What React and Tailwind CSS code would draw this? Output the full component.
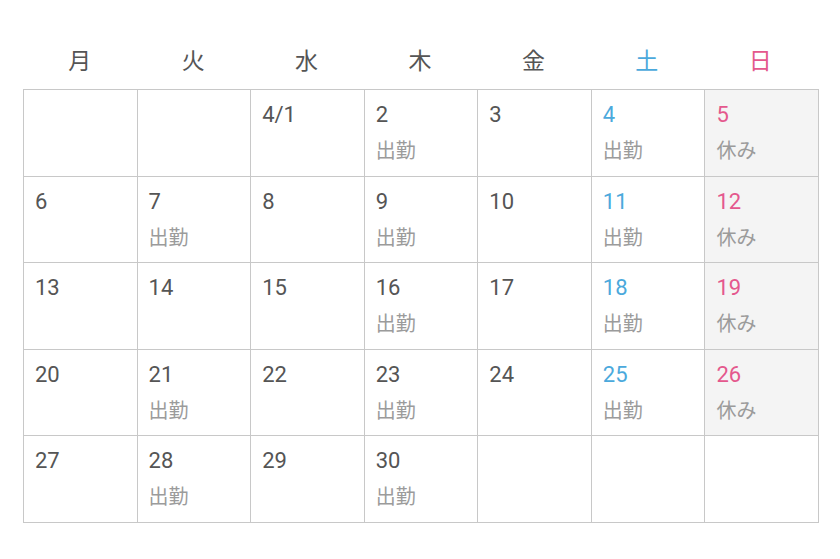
import React from "react";

const days = ["月", "火", "水", "木", "金", "土", "日"];

// null = empty cell
const weeks = [
  [null, null, { d: "4/1" }, { d: "2", s: "出勤" }, { d: "3" }, { d: "4", s: "出勤" }, { d: "5", s: "休み" }],
  [{ d: "6" }, { d: "7", s: "出勤" }, { d: "8" }, { d: "9", s: "出勤" }, { d: "10" }, { d: "11", s: "出勤" }, { d: "12", s: "休み" }],
  [{ d: "13" }, { d: "14" }, { d: "15" }, { d: "16", s: "出勤" }, { d: "17" }, { d: "18", s: "出勤" }, { d: "19", s: "休み" }],
  [{ d: "20" }, { d: "21", s: "出勤" }, { d: "22" }, { d: "23", s: "出勤" }, { d: "24" }, { d: "25", s: "出勤" }, { d: "26", s: "休み" }],
  [{ d: "27" }, { d: "28", s: "出勤" }, { d: "29" }, { d: "30", s: "出勤" }, null, null, null],
];

const headColor = (i) =>
  i === 5 ? "text-[#4ba9dc]" : i === 6 ? "text-[#e4588d]" : "text-[#555555]";

const Cell = ({ cell, col }) => {
  const bg = cell && col === 6 ? "bg-[#f4f4f4]" : "bg-white";
  return (
    <div className={`h-[86.6px] border-r border-b border-[#c8c8c8] px-[11px] pt-[11px] ${bg}`}>
      {cell && (
        <>
          <div className={`text-[22px] leading-[28px] ${headColor(col)}`}>{cell.d}</div>
          {cell.s && (
            <div className="mt-[9px] text-[20px] leading-[26px] text-[#9b9b9b]">{cell.s}</div>
          )}
        </>
      )}
    </div>
  );
};

const App = () => {
  return (
    <div
      className="w-[840px] h-[559px] bg-white pt-[40px] px-[23px]"
      style={{ fontFamily: 'Roboto, "Noto Sans CJK JP", sans-serif' }}
    >
      {/* weekday header */}
      <div className="grid grid-cols-7 h-[44px] mb-[5px]">
        {days.map((d, i) => (
          <div key={d} className={`flex items-center justify-center text-[23px] ${headColor(i)}`}>
            {d}
          </div>
        ))}
      </div>

      {/* month grid */}
      <div className="grid grid-cols-7 border-l border-t border-[#c8c8c8] w-[796px]">
        {weeks.map((week, r) =>
          week.map((cell, c) => <Cell key={`${r}-${c}`} cell={cell} col={c} />)
        )}
      </div>
    </div>
  );
};

export default App;
